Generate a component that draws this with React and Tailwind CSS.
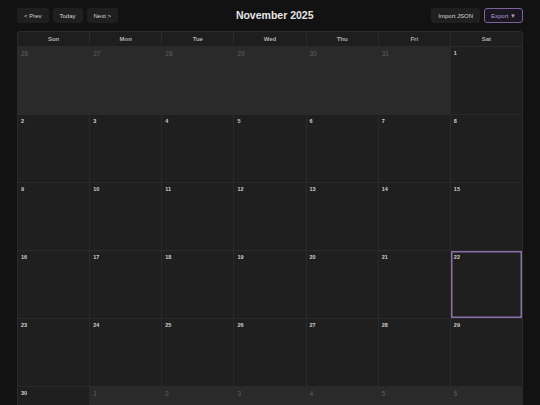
import { useState } from 'react'

const DAYS = ['Sun', 'Mon', 'Tue', 'Wed', 'Thu', 'Fri', 'Sat']

// November 2025 grid, padded with trailing Oct / leading Dec days
function buildCells() {
  const cells = []
  for (let d = 26; d <= 31; d++) cells.push({ day: d, outside: true })
  for (let d = 1; d <= 30; d++) cells.push({ day: d, outside: false })
  for (let d = 1; d <= 6; d++) cells.push({ day: d, outside: true })
  return cells
}

function Btn({ children, accent }) {
  return (
    <button
      className={
        accent
          ? 'h-[15px] px-[6px] rounded-[3px] border border-[#7d62a0] bg-[#1b1720] text-[#b79bd9] text-[6px] leading-none'
          : 'h-[15px] px-[7px] rounded-[3px] bg-[#1f1f1f] text-[#d6d6d6] text-[6px] leading-none'
      }
    >
      {children}
    </button>
  )
}

export default function App() {
  const [today] = useState(22)
  const cells = buildCells()

  return (
    <div
      className="min-h-[405px] bg-[#121212] px-[17px] pt-[8px] antialiased"
      style={{ fontFamily: '"Liberation Sans", Arial, sans-serif' }}
    >
      <div className="flex items-center justify-between h-[15px]">
        <div className="flex gap-[4px]">
          <Btn>&lt; Prev</Btn>
          <Btn>Today</Btn>
          <Btn>Next &gt;</Btn>
        </div>
        <div className="text-[10.5px] font-bold text-[#e6e6e6] leading-none">November 2025</div>
        <div className="flex gap-[4px]">
          <Btn>Import JSON</Btn>
          <Btn accent>Export ▼</Btn>
        </div>
      </div>

      <div className="mt-[8px] rounded-[3px] border border-[#2a2a2a] bg-[#2a2a2a] overflow-hidden">
        <div className="grid grid-cols-7 gap-x-px">
          {DAYS.map(d => (
            <div
              key={d}
              className="h-[14px] flex items-center justify-center bg-[#1e1e1e] text-[6px] font-bold text-[#b0b0b0]"
            >
              {d}
            </div>
          ))}
        </div>
        <div className="grid grid-cols-7 gap-px pt-px">
          {cells.map((c, i) => {
            const isToday = !c.outside && c.day === today
            return (
              <div
                key={i}
                className={
                  'h-[67px] px-[3px] pt-[4px] leading-none ' +
                  (c.outside
                    ? 'bg-[#2a2a2a] text-[#606060] text-[6.5px]'
                    : 'bg-[#1f1f1f] text-[#cfcfcf] font-bold text-[5.5px]') +
                  (isToday ? ' shadow-[inset_0_0_0_1.5px_#8a6fab]' : '')
                }
              >
                {c.day}
              </div>
            )
          })}
        </div>
      </div>
    </div>
  )
}
